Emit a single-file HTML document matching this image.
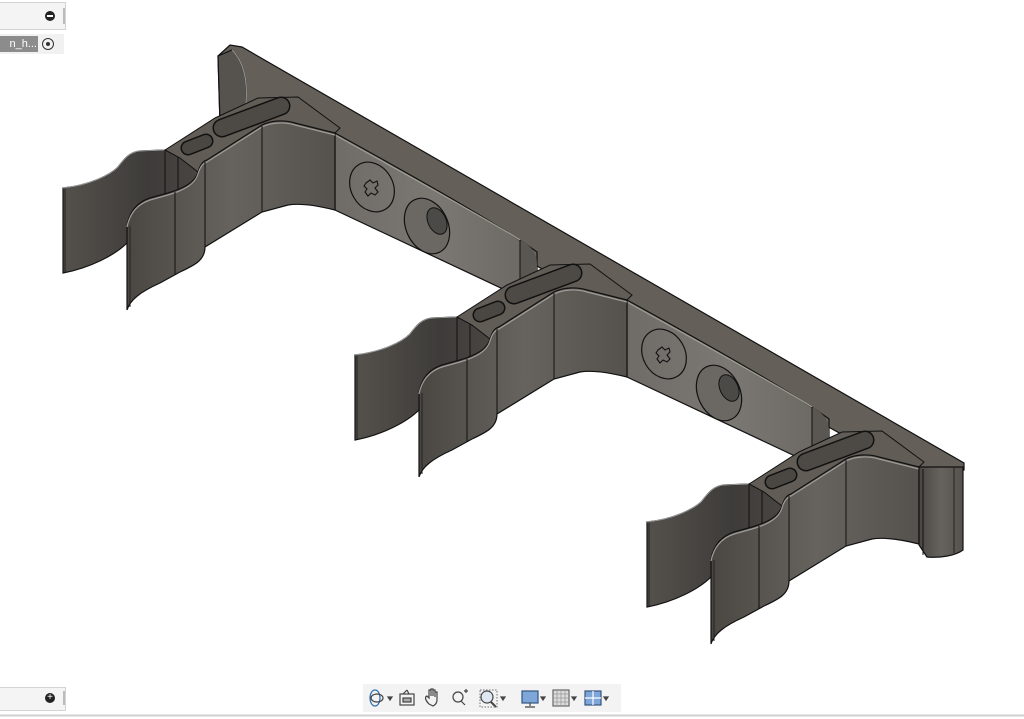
<!DOCTYPE html>
<html><head><meta charset="utf-8"><style>
html,body{margin:0;padding:0;background:#fff;width:1024px;height:719px;overflow:hidden;font-family:"Liberation Sans",sans-serif}
.box{position:absolute;background:#f4f4f4;border:1px solid #d4d4d4}
</style></head><body>
<svg width="1024" height="719" style="position:absolute;left:0;top:0">
<defs>
<linearGradient id="arm" x1="0" x2="1" y1="0" y2="0">
<stop offset="0" stop-color="#4a4743"/><stop offset="0.5" stop-color="#66635e"/><stop offset="1" stop-color="#55524d"/></linearGradient>
<linearGradient id="back" x1="0" x2="1" y1="0" y2="0">
<stop offset="0" stop-color="#54514c"/><stop offset="0.6" stop-color="#3e3c39"/><stop offset="1" stop-color="#4a4743"/></linearGradient>
<linearGradient id="wall" x1="0" x2="1" y1="0" y2="0">
<stop offset="0" stop-color="#6f6c67"/><stop offset="0.5" stop-color="#7b7873"/><stop offset="1" stop-color="#6a6762"/></linearGradient>
<g id="wallu">
<path d="M335,133 C420,180 500,225 537,252 L537,305 L335,210 Z" fill="url(#wall)" stroke="#111" stroke-width="1.2"/>
<path d="M335,135 C420,182 500,227 520,240" fill="none" stroke="#a09c95" stroke-width="1.2"/>
<path d="M520,240 C532,246 537,254 537,264 L537,300 L520,292 Z" fill="#5a5752"/>
<line x1="520" y1="240" x2="520" y2="290" stroke="#111" stroke-width="1"/>
<ellipse cx="372" cy="187" rx="21" ry="26" transform="rotate(-30 372 187)" fill="none" stroke="#111" stroke-width="1.2"/>
<path d="M366,183 l4,-3 l3,3 l4,-2 l1,4 l-3,3 l3,4 l-3,3 l-4,-2 l-3,3 l-3,-4 l2,-3 l-3,-3 z" fill="none" stroke="#111" stroke-width="1.1"/>
<ellipse cx="427" cy="226" rx="21" ry="29" transform="rotate(-25 427 226)" fill="#6b6863" stroke="#111" stroke-width="1.2"/>
<ellipse cx="437" cy="221" rx="9" ry="14" transform="rotate(-25 437 221)" fill="#4c4a46" stroke="#111" stroke-width="1"/>
</g>
<g id="clip">
<path d="M63,188 C90,185 110,175 118,167 C125,158 130,152 140,151 L165,150 L180,146 L195,138 L205,200 L127,243 C115,255 90,268 63,273 Z" fill="url(#back)" stroke="#111" stroke-width="1.2"/>
<path d="M63,188 C90,185 110,175 118,167 C125,158 130,152 140,151 L165,150 L180,146 L195,138" fill="none" stroke="#999" stroke-width="1"/>
<line x1="165" y1="150" x2="165" y2="230" stroke="#111" stroke-width="1"/>
<line x1="178" y1="147" x2="178" y2="225" stroke="#111" stroke-width="1"/>
<line x1="65" y1="189" x2="65" y2="272" stroke="#222" stroke-width="1"/>
<path d="M165,150 L215,118 L258,98 L298,97 L340,128 L335,133 L262,125 L207,160 L198,172 L180,158 Z" fill="#615d56" stroke="#111" stroke-width="1"/>
<line x1="222" y1="128" x2="281" y2="106" stroke="#111" stroke-width="19" stroke-linecap="round"/>
<line x1="222" y1="128" x2="281" y2="106" stroke="#4d4a46" stroke-width="16" stroke-linecap="round"/>
<line x1="188" y1="148" x2="206" y2="141" stroke="#111" stroke-width="15" stroke-linecap="round"/>
<line x1="188" y1="148" x2="206" y2="141" stroke="#4a4743" stroke-width="12" stroke-linecap="round"/>
<path d="M127,225 C130,210 138,202 150,198 L168,193 C185,188 195,182 198,172 C200,165 203,161 207,160 L262,125 C272,120 285,120 295,123 L335,133 L335,210 C315,205 300,203 288,205 L262,212 L205,247 C205,260 195,265 180,272 L160,283 C140,292 130,300 127,310 Z" fill="url(#arm)" stroke="#111" stroke-width="1.2"/>
<path d="M127,225 C130,210 138,202 150,198 L168,193 C185,188 195,182 198,172 C200,165 203,161 207,160 L262,125 C272,120 285,120 295,123 L335,133" fill="none" stroke="#a09d98" stroke-width="1.2" transform="translate(0,2)"/>
<line x1="130" y1="226" x2="130" y2="307" stroke="#222" stroke-width="1"/>
<line x1="175" y1="192" x2="175" y2="275" stroke="#111" stroke-width="1"/>
<line x1="205" y1="162" x2="205" y2="247" stroke="#111" stroke-width="1"/>
<line x1="262" y1="126" x2="262" y2="212" stroke="#111" stroke-width="1"/>
</g>
</defs>
<!-- rail top -->
<path d="M218,56 L230,45 L242,47 L964,463 L964,470 L921,478 L236,100 L220,124 Z" fill="#645f58" stroke="#111" stroke-width="1.2"/>
<path d="M218,56 L232,50 C244,62 248,80 246,104 L220,124 Z" fill="#56534e" stroke="#111" stroke-width="1.2"/>
<path d="M232,50 C244,62 248,80 246,104" fill="none" stroke="#999" stroke-width="1"/>
<use href="#wallu"/>
<use href="#wallu" transform="translate(292,167)"/>
<use href="#clip"/>
<use href="#clip" transform="translate(292,167)"/>
<use href="#clip" transform="translate(584,334)"/>
<path d="M919,467 L963,467 L963,550 C955,556 940,558 927,557 L919,545 Z" fill="url(#arm)" stroke="#111" stroke-width="1.2"/>
<line x1="923" y1="469" x2="923" y2="555" stroke="#111" stroke-width="1"/>
<line x1="954" y1="467" x2="954" y2="553" stroke="#222" stroke-width="1"/>
<line x1="0" y1="715.5" x2="1024" y2="715.5" stroke="#cfcfcf" stroke-width="2"/>
</svg>
<div class="box" style="left:-2px;top:2px;width:66px;height:26px"></div>
<div style="position:absolute;left:45px;top:11px;width:10px;height:10px;border-radius:50%;background:#222"></div>
<div style="position:absolute;left:47px;top:15px;width:6px;height:2px;background:#fff"></div>
<div style="position:absolute;left:63px;top:8px;width:2px;height:16px;background:#bbb"></div>
<div style="position:absolute;left:0;top:34px;width:64px;height:20px;background:#f1f1f1"></div>
<div style="position:absolute;left:0;top:36px;width:37px;height:16px;background:#8c8c8c;color:#fff;font-size:11px;line-height:16px;text-align:right;padding-right:1px">n_h...</div>
<div style="position:absolute;left:42px;top:38px;width:10px;height:10px;border-radius:50%;border:1.5px solid #333"></div>
<div style="position:absolute;left:46px;top:42px;width:4px;height:4px;border-radius:50%;background:#333"></div>
<div class="box" style="left:-2px;top:687px;width:66px;height:22px"></div>
<div style="position:absolute;left:45px;top:693px;width:10px;height:10px;border-radius:50%;background:#222;color:#fff;font-size:10px;line-height:10px;text-align:center">+</div>
<div style="position:absolute;left:63px;top:691px;width:2px;height:14px;background:#bbb"></div>
<div style="position:absolute;left:363px;top:684px;width:258px;height:28px;background:#f3f3f3"></div>
<svg width="260" height="28" style="position:absolute;left:363px;top:684px" fill="none" stroke="#444" stroke-width="1.2">
<ellipse cx="12" cy="14" rx="5" ry="8" stroke="#2a6fb0"/><ellipse cx="14" cy="14" rx="6" ry="4"/>
<path d="M25,13 l4,0 l-2,3z" fill="#444"/>
<rect x="37" y="10" width="14" height="11"/><rect x="40" y="14" width="8" height="4" fill="#aaa"/><path d="M40,10 l4,-4 M46,10 l-2,-4"/>
<path d="M66,20 c-3,-3 -5,-7 -2,-8 l2,2 l0,-8 l2,0 l0,6 l0,-7 l2,0 l0,7 l0,-6 l2,0 l0,7 l0,-5 l2,0 l0,8 c0,3 -2,5 -4,6z"/>
<circle cx="95" cy="13" r="5"/><path d="M98,17 l4,4"/><path d="M101,7 h4 M103,5 v4"/>
<circle cx="124" cy="13" r="6" fill="#dfe8f2"/><path d="M128,18 l5,5" stroke-width="2"/><rect x="117" y="6" width="17" height="17" stroke-dasharray="1.5 1.5" stroke="#888"/>
<path d="M138,13 l4,0 l-2,3z" fill="#444"/>
<rect x="159" y="7" width="16" height="12" fill="#7ea6d8" stroke="#33557f"/><path d="M167,19 v3 M162,23 h10"/>
<path d="M178,13 l4,0 l-2,3z" fill="#444"/>
<rect x="190" y="6" width="16" height="16" fill="#ddd" stroke="#666"/><path d="M194,6v16M198,6v16M202,6v16M190,10h16M190,14h16M190,18h16" stroke="#999" stroke-width="0.8"/>
<path d="M209,13 l4,0 l-2,3z" fill="#444"/>
<rect x="222" y="7" width="16" height="14" fill="#7ea6d8" stroke="#33557f"/><path d="M230,7v14M222,14h16" stroke="#fff"/>
<path d="M241,13 l4,0 l-2,3z" fill="#444"/>
</svg>
</body></html>
